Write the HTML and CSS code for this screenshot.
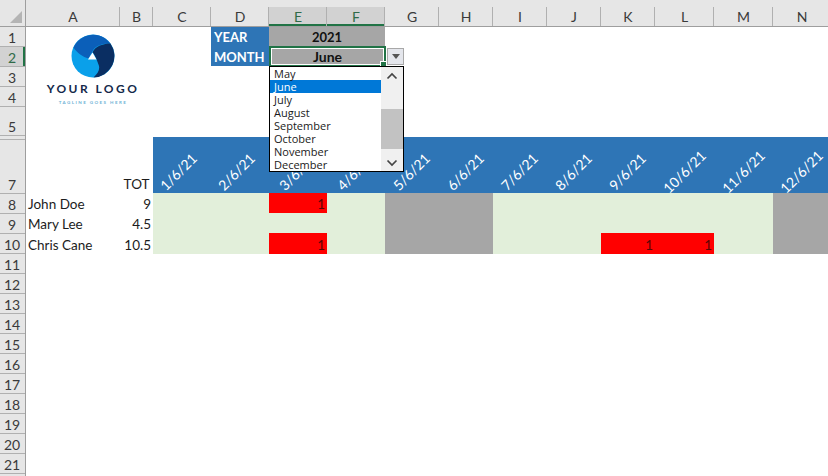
FILE: index.html
```html
<!DOCTYPE html>
<html lang="en">
<head>
<meta charset="utf-8">
<title>Timesheet</title>
<link rel="stylesheet" href="styles.css">
</head>
<body>
<div class="app">
  <div class="rowhead">
    <div class="corner"><svg class="corner-mark" width="14" height="14" viewBox="0 0 14 14"><polygon points="13,1 13,13 1,13" fill="#b4b4b4"/></svg></div>
    <div class="rh h20">1</div>
    <div class="rh h20 sel">2</div>
    <div class="rh h20">3</div>
    <div class="rh h20">4</div>
    <div class="rh h29">5</div>
    <div class="rh h4"></div>
    <div class="rh h54">7</div>
    <div class="rh h20">8</div>
    <div class="rh h20">9</div>
    <div class="rh h20">10</div>
    <div class="rh h20">11</div>
    <div class="rh h20">12</div>
    <div class="rh h20">13</div>
    <div class="rh h20">14</div>
    <div class="rh h20">15</div>
    <div class="rh h20">16</div>
    <div class="rh h20">17</div>
    <div class="rh h20">18</div>
    <div class="rh h20">19</div>
    <div class="rh h20">20</div>
    <div class="rh h20">21</div>
  </div>
  <div class="main">
    <div class="colhead">
      <div class="ch">A</div><div class="ch">B</div><div class="ch">C</div><div class="ch">D</div>
      <div class="ch sel">E</div><div class="ch sel">F</div>
      <div class="ch">G</div><div class="ch">H</div><div class="ch">I</div><div class="ch">J</div>
      <div class="ch">K</div><div class="ch">L</div><div class="ch">M</div><div class="ch">N</div>
    </div>
    <div class="sheet">
      <!-- row 1 -->
      <div class="c span3"></div><div class="c label">YEAR</div><div class="c span2 value">2021</div><div class="c span8"></div>
      <!-- row 2 -->
      <div class="c span3"></div><div class="c label lower">MONTH</div><div class="c span2 value active">June</div><div class="c span8"></div>
      <!-- rows 3-5 -->
      <div class="c span14"></div>
      <div class="c span14"></div>
      <div class="c span14"></div>
      <!-- row 7 -->
      <div class="c"></div><div class="c num tot">TOT</div>
      <div class="c date shift"><span>1/6/21</span></div><div class="c date shift"><span>2/6/21</span></div><div class="c date"><span>3/6/21</span></div><div class="c date"><span>4/6/21</span></div><div class="c date"><span>5/6/21</span></div><div class="c date"><span>6/6/21</span></div><div class="c date"><span>7/6/21</span></div><div class="c date"><span>8/6/21</span></div><div class="c date"><span>9/6/21</span></div><div class="c date"><span>10/6/21</span></div><div class="c date"><span>11/6/21</span></div><div class="c date"><span>12/6/21</span></div>
      <!-- row 8 -->
      <div class="c name">John Doe</div><div class="c num">9</div>
      <div class="c green"></div><div class="c green"></div><div class="c red">1</div><div class="c green"></div><div class="c grey"></div><div class="c grey"></div><div class="c green"></div><div class="c green"></div><div class="c green"></div><div class="c green"></div><div class="c green"></div><div class="c grey"></div>
      <!-- row 9 -->
      <div class="c name">Mary Lee</div><div class="c num">4.5</div>
      <div class="c green"></div><div class="c green"></div><div class="c green"></div><div class="c green"></div><div class="c grey"></div><div class="c grey"></div><div class="c green"></div><div class="c green"></div><div class="c green"></div><div class="c green"></div><div class="c green"></div><div class="c grey"></div>
      <!-- row 10 -->
      <div class="c name">Chris Cane</div><div class="c num">10.5</div>
      <div class="c green"></div><div class="c green"></div><div class="c red">1</div><div class="c green"></div><div class="c grey"></div><div class="c grey"></div><div class="c green"></div><div class="c green"></div><div class="c red">1</div><div class="c red">1</div><div class="c green"></div><div class="c grey"></div>
    </div>

    <div class="logo">
      <svg class="logo-mark" width="44" height="44" viewBox="0 0 44 44">
        <circle cx="22" cy="22" r="21.5" fill="#0aa0ea"/>
        <path d="M2.500 13.500A21.500 21.500 0 0 1 39.400 9.500C33 9.500 26.500 10.500 22.500 15.500L17.500 24.500C12 23 6 19 2.500 13.500Z" fill="#0b5fb9"/>
        <path d="M39.400 9.500A21.500 21.500 0 0 1 22.500 43.500C27 39 29.500 35 27.500 30.500C26 26 23.500 20 21.500 18.500C24 12 33 9.500 39.400 9.500Z" fill="#0a2e62"/>
        <polygon points="21.500,18.500 25.500,25.500 17,25.500" fill="#fff"/>
      </svg>
      <div class="logo-title">YOUR LOGO</div>
      <div class="logo-tag">TAGLINE GOES HERE</div>
    </div>

    <div class="dd-button"><svg width="8" height="5" viewBox="0 0 8 5"><polygon points="0,0 8,0 4,5" fill="#555"/></svg></div>

    <div class="dropdown">
      <ul class="list">
        <li>May</li>
        <li class="on">June</li>
        <li>July</li>
        <li>August</li>
        <li>September</li>
        <li>October</li>
        <li>November</li>
        <li>December</li>
      </ul>
      <div class="scroll">
        <div class="sb-btn"><svg width="12" height="8" viewBox="0 0 12 8"><path d="M1.500 6.500L6 2L10.500 6.500" fill="none" stroke="#444" stroke-width="1.700"/></svg></div>
        <div class="sb-track"><div class="sb-thumb"></div></div>
        <div class="sb-btn"><svg width="12" height="8" viewBox="0 0 12 8"><path d="M1.500 1.500L6 6L10.500 1.500" fill="none" stroke="#444" stroke-width="1.700"/></svg></div>
      </div>
    </div>
  </div>
</div>
</body>
</html>
```
FILE: styles.css
```css
* { box-sizing: border-box; }
html, body { margin: 0; padding: 0; }
body {
  width: 828px;
  height: 476px;
  overflow: hidden;
  background: #fff;
  font-family: "Lato", "Liberation Sans", sans-serif;
  font-size: 13.5px;
  color: #1c1c1c;
}
.app { display: flex; width: 828px; height: 476px; overflow: hidden; }

/* row headers */
.rowhead { flex: 0 0 26px; display: flex; flex-direction: column; background: #e6e6e6; border-right: 1px solid #9e9e9e; }
.corner { flex: 0 0 27px; height: 27px; border-bottom: 1px solid #9e9e9e; padding: 10px 0 0 9px; }
.corner-mark { display: block; }
.rh {
  display: flex; align-items: flex-end; justify-content: center;
  border-bottom: 1px solid #b0b0b0;
  font-size: 14px; line-height: 16px; color: #3a3a3a; padding-right: 1px;
}
.rh.h20 { flex: 0 0 20px; }
.rh.h29 { flex: 0 0 28.500px; }
.rh.h4 { flex: 0 0 4px; }
.rh.h54 { flex: 0 0 54px; }
.rh.sel { background: #d2d2d2; box-shadow: inset -2px 0 0 #217346; color: #2f6b48; }

/* column headers */
.main { position: relative; flex: 1 1 auto; min-width: 0; }
.colhead {
  display: grid;
  grid-template-columns: 94px 33px 58px 58px 58px 58px 54px 54px 54px 54px 54px 59px 59px 58px;
  height: 27px;
  padding-top: 7px;
  background: #e6e6e6;
  border-bottom: 1px solid #9e9e9e;
}
.ch {
  display: flex; align-items: center; justify-content: center;
  font-size: 14px; color: #3a3a3a; padding-left: 1px;
  border-right: 1px solid #b0b0b0;
}
.ch.sel { background: #d2d2d2; box-shadow: inset 0 -2px 0 #217346; color: #2f6b48; }

/* sheet */
.sheet {
  display: grid;
  grid-template-columns: 94px 33px 58px 58px 58px 58px 54px 54px 54px 54px 54px 59px 59px 58px;
  grid-template-rows: 19px 20px 20px 20px 31px 56px 20px 20px 21px;
}
.c { min-width: 0; display: flex; align-items: center; line-height: 18px; }
.span2 { grid-column: span 2; }
.span3 { grid-column: span 3; }
.span8 { grid-column: span 8; }
.span14 { grid-column: span 14; }
.label { background: #2e75b6; color: #fff; font-weight: 700; font-size: 13px; padding-left: 3px; }
.label.lower { padding-top: 1px; }
.value { background: #a6a6a6; font-weight: 700; font-size: 13px; justify-content: center; color: #111; }
.value.active { position: relative; border: 2px solid #217346; box-shadow: inset 0 0 0 1px #fff; width: 117px; height: 21px; padding-top: 1px; font-size: 14px; }
.value.active::after { content: ""; position: absolute; right: -3px; bottom: -3px; width: 5px; height: 5px; background: #217346; border: 1px solid #fff; }
.name { padding: 2px 0 0 2px; }
.num { justify-content: flex-end; padding: 2px 2px 0 0; }
.tot { align-items: flex-end; padding: 0 3.500px 0 0; }
.date { background: #2e75b6; color: #fff; justify-content: center; align-items: flex-end; padding-bottom: 12px; font-size: 14px; }
.date span { display: block; transform: rotate(-45deg); white-space: nowrap; }
.date.shift span { margin-right: 6px; }
.green { background: #e2efda; }
.grey { background: #a6a6a6; }
.red { background: #ff0000; color: #5a0505; justify-content: flex-end; padding: 2px 2px 0 0; }

/* logo over cells */
.logo { position: absolute; left: 11px; top: 34px; width: 112px; display: flex; flex-direction: column; align-items: center; }
.logo-mark { display: block; }
.logo-title { margin-top: 4px; font-size: 12px; line-height: 14px; font-weight: 700; letter-spacing: 2.450px; color: #14294a; white-space: nowrap; }
.logo-tag { margin-top: 4px; font-size: 4.500px; line-height: 6px; font-weight: 700; letter-spacing: 1.450px; color: #6fb3d6; white-space: nowrap; }

/* validation dropdown */
.dd-button {
  position: absolute; left: 361px; top: 48px; width: 17px; height: 17px;
  display: flex; align-items: center; justify-content: center;
  background: #e4e6ec; border: 1px solid #a8a8a8;
}
.dropdown {
  position: absolute; left: 243px; top: 66px; width: 135px; height: 106px;
  display: flex; background: #fff; border: 1px solid #000;
}
.list {
  flex: 1 1 auto; margin: 0; padding: 0; list-style: none;
  font-family: "Open Sans", "Liberation Sans", sans-serif; font-size: 11px; color: #1a1a1a;
}
.list li { height: 13px; line-height: 13px; padding-left: 4px; }
.list li.on { background: #0078d7; color: #fff; }
.scroll { flex: 0 0 22px; display: flex; flex-direction: column; background: #f0f0f0; }
.sb-btn { flex: 0 0 17px; display: flex; align-items: center; justify-content: center; height: 17px; }
.sb-track { flex: 1 1 auto; padding: 25px 0 5px; display: flex; }
.sb-thumb { flex: 1 1 auto; background: #c2c2c2; }
```
